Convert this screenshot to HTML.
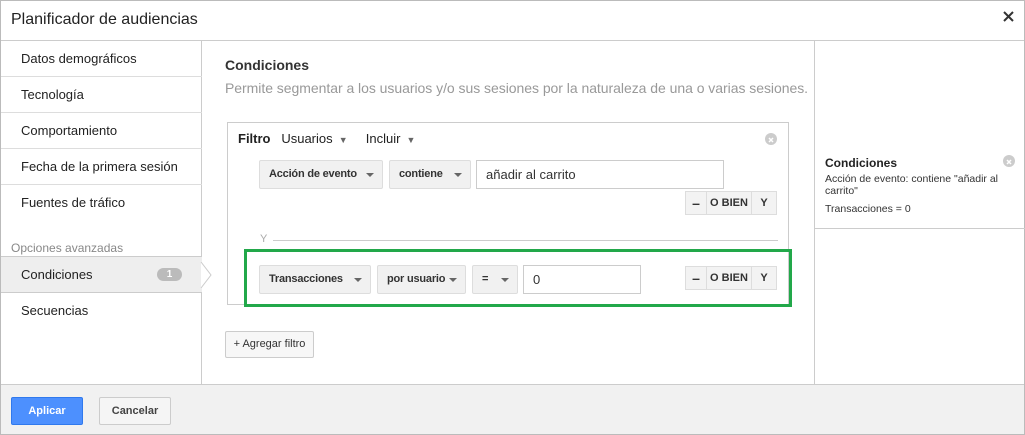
<!DOCTYPE html>
<html><head><meta charset="utf-8"><style>
*{box-sizing:border-box;margin:0;padding:0}
body{width:1025px;height:435px;position:relative;overflow:hidden;background:#fff;font-family:"Liberation Sans",sans-serif;color:#222}
.a{position:absolute}
.frame{left:0;top:0;width:1025px;height:435px;border:1px solid #bbb}
.hdr{left:1px;top:0;width:1023px;height:41px;border-bottom:1px solid #ccc;font-size:16px;padding:11px 10px;color:#222}
.dd{position:absolute;background:#f1f1f1;border:1px solid #ddd;border-radius:2px;font-size:11px;font-weight:bold;color:#333;padding:0 9px;height:29px;line-height:27px;letter-spacing:-.2px}
.dd i{position:absolute;right:8px;top:12px;border:4px solid transparent;border-top:4px solid #666;border-bottom:0}
.side{left:1px;top:41px;width:201px;height:343px;border-right:1px solid #ccc}
.it{position:absolute;left:0;width:201px;height:36px;border-bottom:1px solid #ddd;font-size:13px;padding:10px 20px;color:#222}
.sel{background:#eee;border-top:1px solid #ccc;border-bottom:1px solid #ccc}
.badge{position:absolute;right:20px;top:11px;width:25px;height:13px;border-radius:7px;background:#bbb;color:#fff;font-size:10px;font-weight:bold;text-align:center;line-height:13px}
.right{left:814px;top:41px;width:211px;height:343px;border-left:1px solid #ccc}
.foot{left:1px;top:384px;width:1023px;height:50px;background:#f1f1f1;border-top:1px solid #ccc}
.btn{position:absolute;height:28px;border-radius:2px;font-size:11px;font-weight:bold;text-align:center;line-height:26px}
.inp{position:absolute;border:1px solid #ccc;height:29px;font-size:13px;padding:6px 9px;color:#333}
.grp{position:absolute;height:24px;border:1px solid #ddd;background:#f3f3f3;font-size:11px;font-weight:bold;color:#333;display:flex}
.grp span{display:block;text-align:center;line-height:22px;border-right:1px solid #ddd}
.grp span:last-child{border-right:0}
.grp span.m{font-size:14px}
.circ{position:absolute;width:12px;height:12px;border-radius:50%;background:#ccc}
</style></head><body>
<div class="a frame"></div>
<div class="a hdr">Planificador de audiencias</div>
<svg class="a" style="left:1003px;top:11px" width="11" height="11"><path d="M1 1L10 10M10 1L1 10" stroke="#333" stroke-width="2"/></svg>
<div class="a side">
<div class="it" style="top:0">Datos demográficos</div>
<div class="it" style="top:36px">Tecnología</div>
<div class="it" style="top:72px">Comportamiento</div>
<div class="it" style="top:108px">Fecha de la primera sesión</div>
<div class="it" style="top:144px;border-bottom:0">Fuentes de tráfico</div>
<div class="a" style="left:10px;top:200px;font-size:12px;color:#888">Opciones avanzadas</div>
<div class="it sel" style="top:215px;height:37px">Condiciones<div class="badge">1</div></div>
<div class="it" style="top:252px;border-bottom:0">Secuencias</div>
</div>
<svg class="a" style="left:200px;top:262px" width="12" height="26"><polyline points="1,0 11,13 1,26" fill="#fff" stroke="#ccc"/></svg>
<div class="a" style="left:225px;top:57px;font-size:14px;font-weight:bold;color:#333">Condiciones</div>
<div class="a" style="left:225px;top:80px;font-size:14px;color:#999;letter-spacing:-0.04px">Permite segmentar a los usuarios y/o sus sesiones por la naturaleza de una o varias sesiones.</div>
<div class="a" style="left:227px;top:122px;width:562px;height:183px;border:1px solid #ccc"></div>
<div class="a" style="left:238px;top:131px;font-size:13px"><b>Filtro</b>&nbsp;&nbsp; Usuarios <span style="font-size:9px;color:#666">&nbsp;▼</span>&nbsp;&nbsp;&nbsp;&nbsp; Incluir <span style="font-size:9px;color:#666">&nbsp;▼</span></div>
<div class="circ" style="left:765px;top:133px"><svg width="12" height="12"><path d="M4 4L8 8M8 4L4 8" stroke="#fff" stroke-width="1.5"/></svg></div>
<div class="dd" style="left:259px;top:160px;width:124px">Acción de evento<i></i></div>
<div class="dd" style="left:389px;top:160px;width:82px">contiene<i></i></div>
<div class="inp" style="left:476px;top:160px;width:248px">añadir al carrito</div>
<div class="grp" style="left:685px;top:191px"><span class="m" style="width:21px">–</span><span style="width:45px">O BIEN</span><span style="width:24px">Y</span></div>
<div class="a" style="left:260px;top:233px;font-size:11px;color:#aaa">Y</div>
<div class="a" style="left:273px;top:240px;width:505px;border-top:1px solid #ccc"></div>
<div class="a" style="left:244px;top:249px;width:548px;height:58px;border:3px solid #22a84a"></div>
<div class="dd" style="left:259px;top:265px;width:112px">Transacciones<i></i></div>
<div class="dd" style="left:377px;top:265px;width:89px">por usuario<i></i></div>
<div class="dd" style="left:472px;top:265px;width:46px">=<i></i></div>
<div class="inp" style="left:523px;top:265px;width:118px">0</div>
<div class="grp" style="left:685px;top:266px"><span class="m" style="width:21px">–</span><span style="width:45px">O BIEN</span><span style="width:24px">Y</span></div>
<div class="a" style="left:225px;top:331px;width:89px;height:27px;border:1px solid #ccc;border-radius:2px;background:#f7f7f7;font-size:11px;line-height:25px;text-align:center;color:#333">+ Agregar filtro</div>
<div class="a right">
<div class="a" style="left:10px;top:115px;font-size:12px;font-weight:bold;color:#222">Condiciones</div>
<div class="a" style="left:10px;top:132px;width:180px;font-size:10.5px;line-height:12px;color:#333">Acción de evento: contiene "añadir al carrito"</div>
<div class="a" style="left:10px;top:162px;font-size:10.5px;color:#333">Transacciones = 0</div>
<div class="circ" style="left:188px;top:114px"><svg width="12" height="12"><path d="M4 4L8 8M8 4L4 8" stroke="#fff" stroke-width="1.5"/></svg></div>
<div class="a" style="left:0;top:187px;width:211px;border-top:1px solid #ccc"></div>
</div>
<div class="a foot">
<div class="btn" style="left:10px;top:12px;width:72px;background:#4d90fe;border:1px solid #3079ed;color:#fff">Aplicar</div>
<div class="btn" style="left:98px;top:12px;width:72px;background:#f5f5f5;border:1px solid #ccc;color:#444">Cancelar</div>
</div>
</body></html>
